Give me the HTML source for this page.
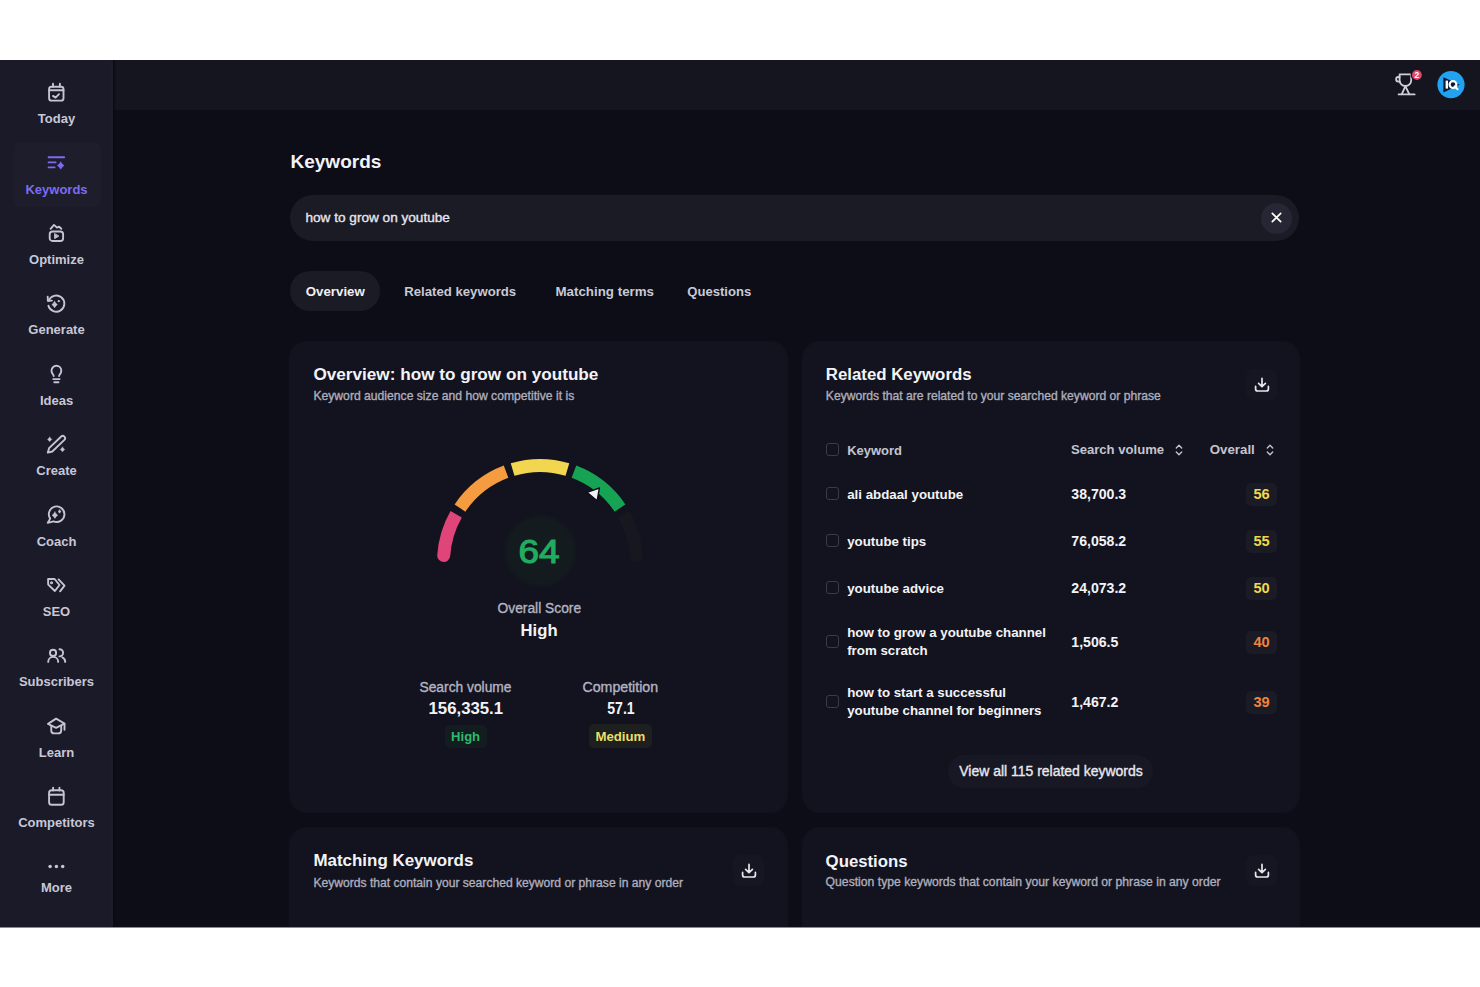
<!DOCTYPE html>
<html><head><meta charset="utf-8"><title>Keywords</title>
<style>
html,body{margin:0;padding:0;background:#ffffff;}
body{width:1480px;height:987px;position:relative;overflow:hidden;font-family:"Liberation Sans",sans-serif;}
.t{position:absolute;white-space:nowrap;}
.m{-webkit-text-stroke:0.35px currentColor;}
.app{position:absolute;left:0;top:60px;width:1480px;height:867px;background:#0c0d17;overflow:hidden;}
.side{position:absolute;left:0;top:60px;width:113px;height:867px;background:#1a1a29;}
.topbar{position:absolute;left:112px;top:60px;width:1368px;height:50px;background:#14151f;}
.card{position:absolute;background:#12131e;border-radius:16px;box-shadow:0 0 0 1px #11121c;}
.box{position:absolute;}
</style></head><body>
<div class="app"></div>
<div class="topbar"></div>
<div class="side"></div>
<div class="box" style="left:110.5px;top:60px;width:2.5px;height:867px;background:#1d1d2a;"></div>
<div class="box" style="left:113px;top:60px;width:3px;height:867px;background:linear-gradient(90deg,#09090f,rgba(12,13,23,0));"></div>
<div class="box" style="left:14px;top:143px;width:87px;height:64px;border-radius:5px;background:#1d1d2b;"></div>
<svg style="position:absolute;left:46px;top:82px" width="21" height="21" viewBox="0 0 21 21" fill="none" stroke="#c5c4d3" stroke-width="1.9" stroke-linecap="round" stroke-linejoin="round">
<rect x="3.1" y="4.8" width="14.4" height="13.8" rx="2.4"/><path d="M3.1 8.2h14.4M7 1.8v3M13.9 1.8v3M7 13.9l2.6 1.7 3.4-3.4"/></svg><div class="t " style="left:-143.5px;top:110.60px;font-size:13px;line-height:15.6px;color:#c8c7d6;font-weight:700;width:400px;text-align:center;">Today</div>
<svg style="position:absolute;left:46px;top:154px" width="21" height="17" viewBox="0 0 21 17" fill="none" stroke="#7c6cf2" stroke-width="1.9" stroke-linecap="round">
<path d="M2.6 3.2h15.6M2.6 8.4h7M2.6 13.4h6"/><path d="M14.7 8.0 Q15.99 10.23 18.099999999999998 11.6 Q15.99 12.97 14.7 15.2 Q13.41 12.97 11.299999999999999 11.6 Q13.41 10.23 14.7 8.0Z" fill="#7c6cf2" stroke="#7c6cf2" stroke-width="0.5" stroke-linejoin="round"/></svg><div class="t " style="left:-143.5px;top:181.60px;font-size:13px;line-height:15.6px;color:#7c6cf2;font-weight:700;width:400px;text-align:center;">Keywords</div>
<svg style="position:absolute;left:46px;top:222px" width="21" height="22" viewBox="0 0 21 22" fill="none" stroke="#c5c4d3" stroke-width="1.9" stroke-linecap="round" stroke-linejoin="round">
<rect x="3.7" y="9.5" width="13.4" height="9.5" rx="2.8"/><path d="M4.6 6.8 L8 2.9 L11 5.6 L13.1 4.7 L15.3 6.8"/><path d="M8.6 11.9V16.6l4-2.35z" fill="#c5c4d3" stroke-width="0.9"/></svg><div class="t " style="left:-143.5px;top:252.00px;font-size:13px;line-height:15.6px;color:#c8c7d6;font-weight:700;width:400px;text-align:center;">Optimize</div>
<svg style="position:absolute;left:46px;top:293px" width="21" height="21" viewBox="0 0 21 21" fill="none" stroke="#c5c4d3" stroke-width="1.9" stroke-linecap="round" stroke-linejoin="round">
<path d="M2.43 12.7 A8.1 8.1 0 1 0 2.64 7.83"/><path d="M1.7 3.7 L1.9 7.9 L5.9 7.6"/><path d="M8.6 8.399999999999999 Q9.66 10.38 11.399999999999999 11.6 Q9.66 12.82 8.6 14.8 Q7.54 12.82 5.8 11.6 Q7.54 10.38 8.6 8.399999999999999Z" fill="#c5c4d3" stroke="#c5c4d3" stroke-width="0.5" stroke-linejoin="round"/><circle cx="12.8" cy="8.2" r="1.15" fill="#c5c4d3" stroke="none"/></svg><div class="t " style="left:-143.5px;top:322.40px;font-size:13px;line-height:15.6px;color:#c8c7d6;font-weight:700;width:400px;text-align:center;">Generate</div>
<svg style="position:absolute;left:46px;top:363px" width="21" height="21" viewBox="0 0 21 21" fill="none" stroke="#c5c4d3" stroke-width="1.9" stroke-linecap="round" stroke-linejoin="round">
<path d="M7.7 13.1 C7.7 11.6 5.5 10.6 5.5 7.7 A4.9 4.9 0 0 1 15.3 7.7 C15.3 10.6 13.1 11.6 13.1 13.1"/><path d="M7.2 16.1h6.4M8.3 19.3h4.2" stroke-width="1.9"/></svg><div class="t " style="left:-143.5px;top:392.80px;font-size:13px;line-height:15.6px;color:#c8c7d6;font-weight:700;width:400px;text-align:center;">Ideas</div>
<svg style="position:absolute;left:46px;top:434px" width="21" height="21" viewBox="0 0 21 21" fill="none" stroke="#c5c4d3" stroke-width="1.9" stroke-linecap="round" stroke-linejoin="round">
<path d="M1.8 18.6 L6.27 17.49 L18.39 5.86 A2.3 2.3 0 0 0 15.21 2.54 L3.09 14.17 Z"/><path d="M3.7 3.2 Q4.71 4.34 5.800000000000001 5.4 Q4.71 6.46 3.7 7.6000000000000005 Q2.69 6.46 1.6 5.4 Q2.69 4.34 3.7 3.2Z" fill="#c5c4d3" stroke="#c5c4d3" stroke-width="0.5" stroke-linejoin="round"/><path d="M16.5 13.2 Q17.56 14.40 18.7 15.5 Q17.56 16.60 16.5 17.8 Q15.44 16.60 14.3 15.5 Q15.44 14.40 16.5 13.2Z" fill="#c5c4d3" stroke="#c5c4d3" stroke-width="0.5" stroke-linejoin="round"/></svg><div class="t " style="left:-143.5px;top:463.20px;font-size:13px;line-height:15.6px;color:#c8c7d6;font-weight:700;width:400px;text-align:center;">Create</div>
<svg style="position:absolute;left:46px;top:504px" width="21" height="21" viewBox="0 0 21 21" fill="none" stroke="#c5c4d3" stroke-width="1.9" stroke-linecap="round" stroke-linejoin="round">
<path d="M4.2 14.6 L1.8 18.8 L7.6 17.4 A7.8 7.8 0 1 0 4.2 14.6 Z"/><path d="M8.9 7.999999999999999 Q9.96 9.98 11.7 11.2 Q9.96 12.42 8.9 14.399999999999999 Q7.84 12.42 6.1000000000000005 11.2 Q7.84 9.98 8.9 7.999999999999999Z" fill="#c5c4d3" stroke="#c5c4d3" stroke-width="0.5" stroke-linejoin="round"/><path d="M13.6 5.85 Q14.29 6.82 15.2 7.55 Q14.29 8.28 13.6 9.25 Q12.91 8.28 12.0 7.55 Q12.91 6.82 13.6 5.85Z" fill="#c5c4d3" stroke="#c5c4d3" stroke-width="0.5" stroke-linejoin="round"/></svg><div class="t " style="left:-143.5px;top:533.70px;font-size:13px;line-height:15.6px;color:#c8c7d6;font-weight:700;width:400px;text-align:center;">Coach</div>
<svg style="position:absolute;left:46px;top:576px" width="21" height="18" viewBox="0 0 21 18" fill="none" stroke="#c5c4d3" stroke-width="1.9" stroke-linecap="round" stroke-linejoin="round">
<path d="M2.1 3.0 H8.6 L13.5 9.0 L8.9 15.0 L2.2 8.6 Z"/><circle cx="5.55" cy="6.8" r="0.6" fill="#c5c4d3"/><path d="M12.6 3.4 L18.5 9.6 L14.1 15.3"/></svg><div class="t " style="left:-143.5px;top:604.00px;font-size:13px;line-height:15.6px;color:#c8c7d6;font-weight:700;width:400px;text-align:center;">SEO</div>
<svg style="position:absolute;left:46px;top:646px" width="21" height="18" viewBox="0 0 21 18" fill="none" stroke="#c5c4d3" stroke-width="1.9" stroke-linecap="round" stroke-linejoin="round">
<circle cx="7.05" cy="6.9" r="3.1"/><path d="M2.2 15.9 A5 5 0 0 1 12.2 15.9"/><path d="M13.5 3.2 A3.6 3.6 0 0 1 13.5 10.4"/><path d="M16.4 11.4 C18.3 12.3 19.2 13.8 19.2 15.9"/></svg><div class="t " style="left:-143.5px;top:674.30px;font-size:13px;line-height:15.6px;color:#c8c7d6;font-weight:700;width:400px;text-align:center;">Subscribers</div>
<svg style="position:absolute;left:46px;top:716px" width="21" height="20" viewBox="0 0 21 20" fill="none" stroke="#c5c4d3" stroke-width="1.9" stroke-linecap="round" stroke-linejoin="round">
<path d="M2.0 7.85 L10.1 2.6 L18.4 7.55 L10.1 11.8 Z"/><path d="M5.25 10 V14.4 Q5.25 17.4 8.4 17.4 H12 Q15.2 17.4 15.2 14.4 V10"/><path d="M18.5 7.8 V13.8"/></svg><div class="t " style="left:-143.5px;top:744.80px;font-size:13px;line-height:15.6px;color:#c8c7d6;font-weight:700;width:400px;text-align:center;">Learn</div>
<svg style="position:absolute;left:46px;top:786px" width="21" height="21" viewBox="0 0 21 21" fill="none" stroke="#c5c4d3" stroke-width="1.9" stroke-linecap="round" stroke-linejoin="round">
<rect x="3.1" y="4.2" width="14.6" height="14.6" rx="2.6"/><path d="M3.1 8.8h14.6M7.1 1.6v3M13.45 1.6v3"/></svg><div class="t " style="left:-143.5px;top:815.20px;font-size:13px;line-height:15.6px;color:#c8c7d6;font-weight:700;width:400px;text-align:center;">Competitors</div>
<svg style="position:absolute;left:46px;top:860px" width="21" height="12" viewBox="0 0 21 12" fill="#c5c4d3">
<circle cx="4.1" cy="6.5" r="1.75"/><circle cx="10.4" cy="6.5" r="1.75"/><circle cx="16.7" cy="6.5" r="1.75"/></svg><div class="t " style="left:-143.5px;top:879.70px;font-size:13px;line-height:15.6px;color:#c8c7d6;font-weight:700;width:400px;text-align:center;">More</div>
<svg style="position:absolute;left:1392px;top:70px" width="32" height="30" viewBox="0 0 32 30" fill="none" stroke="#cfcfd8" stroke-width="1.8" stroke-linecap="round" stroke-linejoin="round">
<path d="M7.6 4.4H19.2V10.2A5.8 5.8 0 0 1 7.6 10.2Z"/><path d="M7.6 7H6.4A2.3 2.3 0 0 0 6.4 11.6H7.9"/><path d="M13.4 16.2 L9.8 24.2M13.4 16.2l3.8 8"/><path d="M6.6 24.4h16"/>
<circle cx="24.9" cy="5" r="5.6" fill="#e0466e" stroke="#14151f" stroke-width="1.4"/><text x="24.9" y="8.1" font-family="Liberation Sans" font-size="8.5" font-weight="700" fill="#fff" stroke="none" text-anchor="middle">2</text></svg>
<svg style="position:absolute;left:1437px;top:70px" width="28" height="29" viewBox="0 0 28 29">
<circle cx="14" cy="14.6" r="13.6" fill="#22a3f2"/><path d="M6.4 7.2 L22.8 14.8 L6.4 22.4 Z" fill="#0b1a33"/>
<rect x="8.6" y="10.6" width="2.4" height="8" fill="#fff"/><circle cx="16" cy="14.6" r="3.4" fill="none" stroke="#fff" stroke-width="2.2"/><path d="M17.6 16.4 L20.6 19.2" stroke="#fff" stroke-width="2" stroke-linecap="round"/></svg>
<div class="t " style="left:290.5px;top:151.02px;font-size:19px;line-height:22.8px;color:#f3f3f7;font-weight:700;">Keywords</div>
<div class="box" style="left:290px;top:195px;width:1009px;height:46px;border-radius:23px;background:#1b1b26;"></div>
<div class="t m" style="left:305.5px;top:209.73px;font-size:13.6px;line-height:16.32px;color:#e6e6ec;font-weight:400;">how to grow on youtube</div>
<div class="box" style="left:1261px;top:202.5px;width:31px;height:31px;border-radius:50%;background:#262734;"></div>
<svg style="position:absolute;left:1270px;top:211px" width="13" height="13" viewBox="0 0 13 13" stroke="#ffffff" stroke-width="1.7" stroke-linecap="round"><path d="M2.3 2.3l8.4 8.4M10.7 2.3l-8.4 8.4"/></svg>
<div class="box" style="left:290px;top:271px;width:90px;height:40px;border-radius:20px;background:#1b1b26;"></div>
<div class="t " style="left:305.8px;top:283.64px;font-size:13.27px;line-height:15.92px;color:#f0f0f4;font-weight:700;">Overview</div>
<div class="t " style="left:404.3px;top:283.74px;font-size:13.17px;line-height:15.8px;color:#c9c9d4;font-weight:700;">Related keywords</div>
<div class="t " style="left:555.5px;top:283.58px;font-size:13.33px;line-height:16.0px;color:#c9c9d4;font-weight:700;">Matching terms</div>
<div class="t " style="left:687.3px;top:283.81px;font-size:13.09px;line-height:15.71px;color:#c9c9d4;font-weight:700;">Questions</div>
<div class="card" style="left:290px;top:342px;width:497px;height:470px;"></div>
<div class="card" style="left:803px;top:342px;width:496px;height:470px;"></div>
<div class="card" style="left:290px;top:828px;width:497px;height:200px;"></div>
<div class="card" style="left:803px;top:828px;width:496px;height:200px;"></div>
<div class="t " style="left:313.4px;top:363.76px;font-size:17.16px;line-height:20.59px;color:#f3f3f7;font-weight:700;">Overview: how to grow on youtube</div>
<div class="t m" style="left:313.4px;top:388.89px;font-size:12.16px;line-height:14.59px;color:#aeaebd;font-weight:400;">Keyword audience size and how competitive it is</div>
<svg style="position:absolute;left:0;top:0" width="1480" height="987" viewBox="0 0 1480 987">
<defs><radialGradient id="cg" cx="50%" cy="50%" r="50%"><stop offset="0%" stop-color="#131c1e"/><stop offset="86%" stop-color="#131b1e"/><stop offset="100%" stop-color="#12131e"/></radialGradient></defs><circle cx="540.5" cy="551" r="37.5" fill="url(#cg)"/>
<path d="M437.23 555.17 A103.0 103.0 0 0 1 450.53 510.97 L461.82 517.41 A90.0 90.0 0 0 0 450.20 556.04 A6.5 6.5 0 0 1 437.23 555.17 Z" fill="#e0457a"/>
<path d="M454.61 504.40 A103.0 103.0 0 0 1 503.76 465.59 L508.33 477.75 A90.0 90.0 0 0 0 465.39 511.67 Z" fill="#f59c40"/>
<path d="M510.75 463.24 A103.0 103.0 0 0 1 569.25 463.24 L565.56 475.71 A90.0 90.0 0 0 0 514.44 475.71 Z" fill="#f3d64f"/>
<path d="M576.24 465.59 A103.0 103.0 0 0 1 625.39 504.40 L614.61 511.67 A90.0 90.0 0 0 0 571.67 477.75 Z" fill="#16a354"/>
<path d="M629.47 510.97 A103.0 103.0 0 0 1 642.77 555.17 A6.5 6.5 0 0 1 629.80 556.04 A90.0 90.0 0 0 0 618.18 517.41 Z" fill="#17181f"/>
<path d="M599.4 488 L587 492.3 L597.1 500.9 Z" fill="#f2f2f6" stroke="#0d0e18" stroke-width="1.4" stroke-linejoin="round"/>
</svg>
<div class="t " style="left:339.4px;top:532.17px;font-size:33px;line-height:39.6px;color:#20ad60;font-weight:400;width:400px;text-align:center;transform:scaleX(1.12);-webkit-text-stroke:1.1px #20ad60;">64</div>
<div class="t m" style="left:339.29999999999995px;top:600.64px;font-size:13.8px;line-height:16.56px;color:#b4b3c2;font-weight:400;width:400px;text-align:center;">Overall Score</div>
<div class="t " style="left:339.1px;top:621.24px;font-size:16.65px;line-height:19.98px;color:#f3f3f7;font-weight:700;width:400px;text-align:center;">High</div>
<div class="t m" style="left:265.5px;top:679.94px;font-size:13.8px;line-height:16.56px;color:#b4b3c2;font-weight:400;width:400px;text-align:center;">Search volume</div>
<div class="t " style="left:265.8px;top:699.45px;font-size:16.75px;line-height:20.1px;color:#f3f3f7;font-weight:700;width:400px;text-align:center;">156,335.1</div>
<div class="box" style="left:445px;top:724.5px;width:42px;height:23.5px;border-radius:5px;background:#131c1f;"></div>
<div class="t " style="left:265.6px;top:729.15px;font-size:13.05px;line-height:15.66px;color:#30b872;font-weight:700;width:400px;text-align:center;">High</div>
<div class="t m" style="left:420.29999999999995px;top:678.76px;font-size:14.2px;line-height:17.04px;color:#b4b3c2;font-weight:400;width:400px;text-align:center;">Competition</div>
<div class="t " style="left:420.5px;top:699.45px;font-size:16.75px;line-height:20.1px;color:#f3f3f7;font-weight:700;width:400px;text-align:center;transform:scaleX(0.84);">57.1</div>
<div class="box" style="left:589px;top:724px;width:63px;height:24px;border-radius:5px;background:#1e1f1f;"></div>
<div class="t " style="left:420.4px;top:728.98px;font-size:13.23px;line-height:15.88px;color:#eadf66;font-weight:700;width:400px;text-align:center;">Medium</div>
<div class="t " style="left:825.8px;top:364.78px;font-size:16.82px;line-height:20.18px;color:#f3f3f7;font-weight:700;">Related Keywords</div>
<div class="t m" style="left:825.8px;top:388.92px;font-size:12.13px;line-height:14.56px;color:#aeaebd;font-weight:400;">Keywords that are related to your searched keyword or phrase</div>
<div class="box" style="left:1246px;top:369px;width:31px;height:31px;border-radius:7px;background:#151621;"></div>
<svg style="position:absolute;left:1252.5px;top:376px" width="18" height="18" viewBox="0 0 18 18" fill="none" stroke="#e8e8ee" stroke-width="1.7" stroke-linecap="round" stroke-linejoin="round"><path d="M9 2.4v8M5.6 7.4 9 10.6l3.4-3.2M2.6 10.4v2.6a2 2 0 0 0 2 2h8.8a2 2 0 0 0 2-2v-2.6"/></svg>
<div class="box" style="left:825.8px;top:443.4px;width:11px;height:11px;border:1.3px solid #3a3b48;border-radius:3px;"></div>
<div class="t " style="left:847.2px;top:442.51px;font-size:12.98px;line-height:15.58px;color:#c4c4d0;font-weight:700;">Keyword</div>
<div class="t " style="left:1070.9px;top:442.39px;font-size:13.11px;line-height:15.73px;color:#c4c4d0;font-weight:700;">Search volume</div>
<div class="t " style="left:1209.8px;top:442.24px;font-size:13.27px;line-height:15.92px;color:#c4c4d0;font-weight:700;">Overall</div>
<svg style="position:absolute;left:1174.4px;top:443.6px" width="10" height="12" viewBox="0 0 10 12" fill="none" stroke="#c4c4d0" stroke-width="1.4" stroke-linecap="round" stroke-linejoin="round"><path d="M2.3 3.9 5 1.3l2.7 2.6M2.3 8.1 5 10.7l2.7-2.6"/></svg>
<svg style="position:absolute;left:1264.8px;top:443.6px" width="10" height="12" viewBox="0 0 10 12" fill="none" stroke="#c4c4d0" stroke-width="1.4" stroke-linecap="round" stroke-linejoin="round"><path d="M2.3 3.9 5 1.3l2.7 2.6M2.3 8.1 5 10.7l2.7-2.6"/></svg>
<div class="box" style="left:825.6px;top:487.2px;width:11px;height:11px;border:1.3px solid #3a3b48;border-radius:3px;"></div>
<div class="t " style="left:847.2px;top:487.21px;font-size:13.3px;line-height:15.96px;color:#f3f3f7;font-weight:700;">ali abdaal youtube</div>
<div class="t " style="left:1071.3px;top:486.45px;font-size:14.1px;line-height:16.92px;color:#f3f3f7;font-weight:700;">38,700.3</div>
<div class="box" style="left:1246px;top:482.5px;width:31px;height:23.5px;border-radius:5px;background:#1a1b25;"></div>
<div class="t " style="left:1061.5px;top:485.98px;font-size:14.6px;line-height:17.52px;color:#f0d84e;font-weight:700;width:400px;text-align:center;">56</div>
<div class="box" style="left:825.6px;top:534.2px;width:11px;height:11px;border:1.3px solid #3a3b48;border-radius:3px;"></div>
<div class="t " style="left:847.2px;top:534.21px;font-size:13.3px;line-height:15.96px;color:#f3f3f7;font-weight:700;">youtube tips</div>
<div class="t " style="left:1071.3px;top:533.45px;font-size:14.1px;line-height:16.92px;color:#f3f3f7;font-weight:700;">76,058.2</div>
<div class="box" style="left:1246px;top:529.5px;width:31px;height:23.5px;border-radius:5px;background:#1a1b25;"></div>
<div class="t " style="left:1061.5px;top:532.98px;font-size:14.6px;line-height:17.52px;color:#f0d84e;font-weight:700;width:400px;text-align:center;">55</div>
<div class="box" style="left:825.6px;top:581.2px;width:11px;height:11px;border:1.3px solid #3a3b48;border-radius:3px;"></div>
<div class="t " style="left:847.2px;top:581.21px;font-size:13.3px;line-height:15.96px;color:#f3f3f7;font-weight:700;">youtube advice</div>
<div class="t " style="left:1071.3px;top:580.45px;font-size:14.1px;line-height:16.92px;color:#f3f3f7;font-weight:700;">24,073.2</div>
<div class="box" style="left:1246px;top:576.5px;width:31px;height:23.5px;border-radius:5px;background:#1a1b25;"></div>
<div class="t " style="left:1061.5px;top:579.98px;font-size:14.6px;line-height:17.52px;color:#f0d84e;font-weight:700;width:400px;text-align:center;">50</div>
<div class="box" style="left:825.6px;top:635.2px;width:11px;height:11px;border:1.3px solid #3a3b48;border-radius:3px;"></div>
<div class="t " style="left:847.2px;top:624.91px;font-size:13.3px;line-height:15.96px;color:#f3f3f7;font-weight:700;">how to grow a youtube channel</div>
<div class="t " style="left:847.2px;top:642.91px;font-size:13.3px;line-height:15.96px;color:#f3f3f7;font-weight:700;">from scratch</div>
<div class="t " style="left:1071.3px;top:634.45px;font-size:14.1px;line-height:16.92px;color:#f3f3f7;font-weight:700;">1,506.5</div>
<div class="box" style="left:1246px;top:630.5px;width:31px;height:23.5px;border-radius:5px;background:#1a1b25;"></div>
<div class="t " style="left:1061.5px;top:633.98px;font-size:14.6px;line-height:17.52px;color:#f0843e;font-weight:700;width:400px;text-align:center;">40</div>
<div class="box" style="left:825.6px;top:695.2px;width:11px;height:11px;border:1.3px solid #3a3b48;border-radius:3px;"></div>
<div class="t " style="left:847.2px;top:684.91px;font-size:13.3px;line-height:15.96px;color:#f3f3f7;font-weight:700;">how to start a successful</div>
<div class="t " style="left:847.2px;top:702.91px;font-size:13.3px;line-height:15.96px;color:#f3f3f7;font-weight:700;">youtube channel for beginners</div>
<div class="t " style="left:1071.3px;top:694.45px;font-size:14.1px;line-height:16.92px;color:#f3f3f7;font-weight:700;">1,467.2</div>
<div class="box" style="left:1246px;top:690.5px;width:31px;height:23.5px;border-radius:5px;background:#1a1b25;"></div>
<div class="t " style="left:1061.5px;top:693.98px;font-size:14.6px;line-height:17.52px;color:#f0843e;font-weight:700;width:400px;text-align:center;">39</div>
<div class="box" style="left:948px;top:755px;width:205px;height:33px;border-radius:16.5px;background:#171823;"></div>
<div class="t m" style="left:851px;top:763.27px;font-size:13.98px;line-height:16.78px;color:#e8e8ee;font-weight:400;width:400px;text-align:center;">View all 115 related keywords</div>
<div class="t " style="left:313.4px;top:851.47px;font-size:16.94px;line-height:20.33px;color:#f3f3f7;font-weight:700;">Matching Keywords</div>
<div class="t m" style="left:313.4px;top:875.53px;font-size:12.12px;line-height:14.54px;color:#aeaebd;font-weight:400;">Keywords that contain your searched keyword or phrase in any order</div>
<div class="box" style="left:733px;top:855px;width:31px;height:31px;border-radius:7px;background:#151621;"></div>
<svg style="position:absolute;left:739.5px;top:862px" width="18" height="18" viewBox="0 0 18 18" fill="none" stroke="#e8e8ee" stroke-width="1.7" stroke-linecap="round" stroke-linejoin="round"><path d="M9 2.4v8M5.6 7.4 9 10.6l3.4-3.2M2.6 10.4v2.6a2 2 0 0 0 2 2h8.8a2 2 0 0 0 2-2v-2.6"/></svg>
<div class="t " style="left:825.6px;top:851.63px;font-size:16.77px;line-height:20.12px;color:#f3f3f7;font-weight:700;">Questions</div>
<div class="t m" style="left:825.6px;top:875.46px;font-size:12.19px;line-height:14.63px;color:#aeaebd;font-weight:400;">Question type keywords that contain your keyword or phrase in any order</div>
<div class="box" style="left:1246px;top:855px;width:31px;height:31px;border-radius:7px;background:#151621;"></div>
<svg style="position:absolute;left:1252.5px;top:862px" width="18" height="18" viewBox="0 0 18 18" fill="none" stroke="#e8e8ee" stroke-width="1.7" stroke-linecap="round" stroke-linejoin="round"><path d="M9 2.4v8M5.6 7.4 9 10.6l3.4-3.2M2.6 10.4v2.6a2 2 0 0 0 2 2h8.8a2 2 0 0 0 2-2v-2.6"/></svg>
<div class="box" style="left:0;top:927px;width:1480px;height:1px;background:#8a8a90;"></div>
<div class="box" style="left:0;top:928px;width:1480px;height:59px;background:#ffffff;"></div>
</body></html>
